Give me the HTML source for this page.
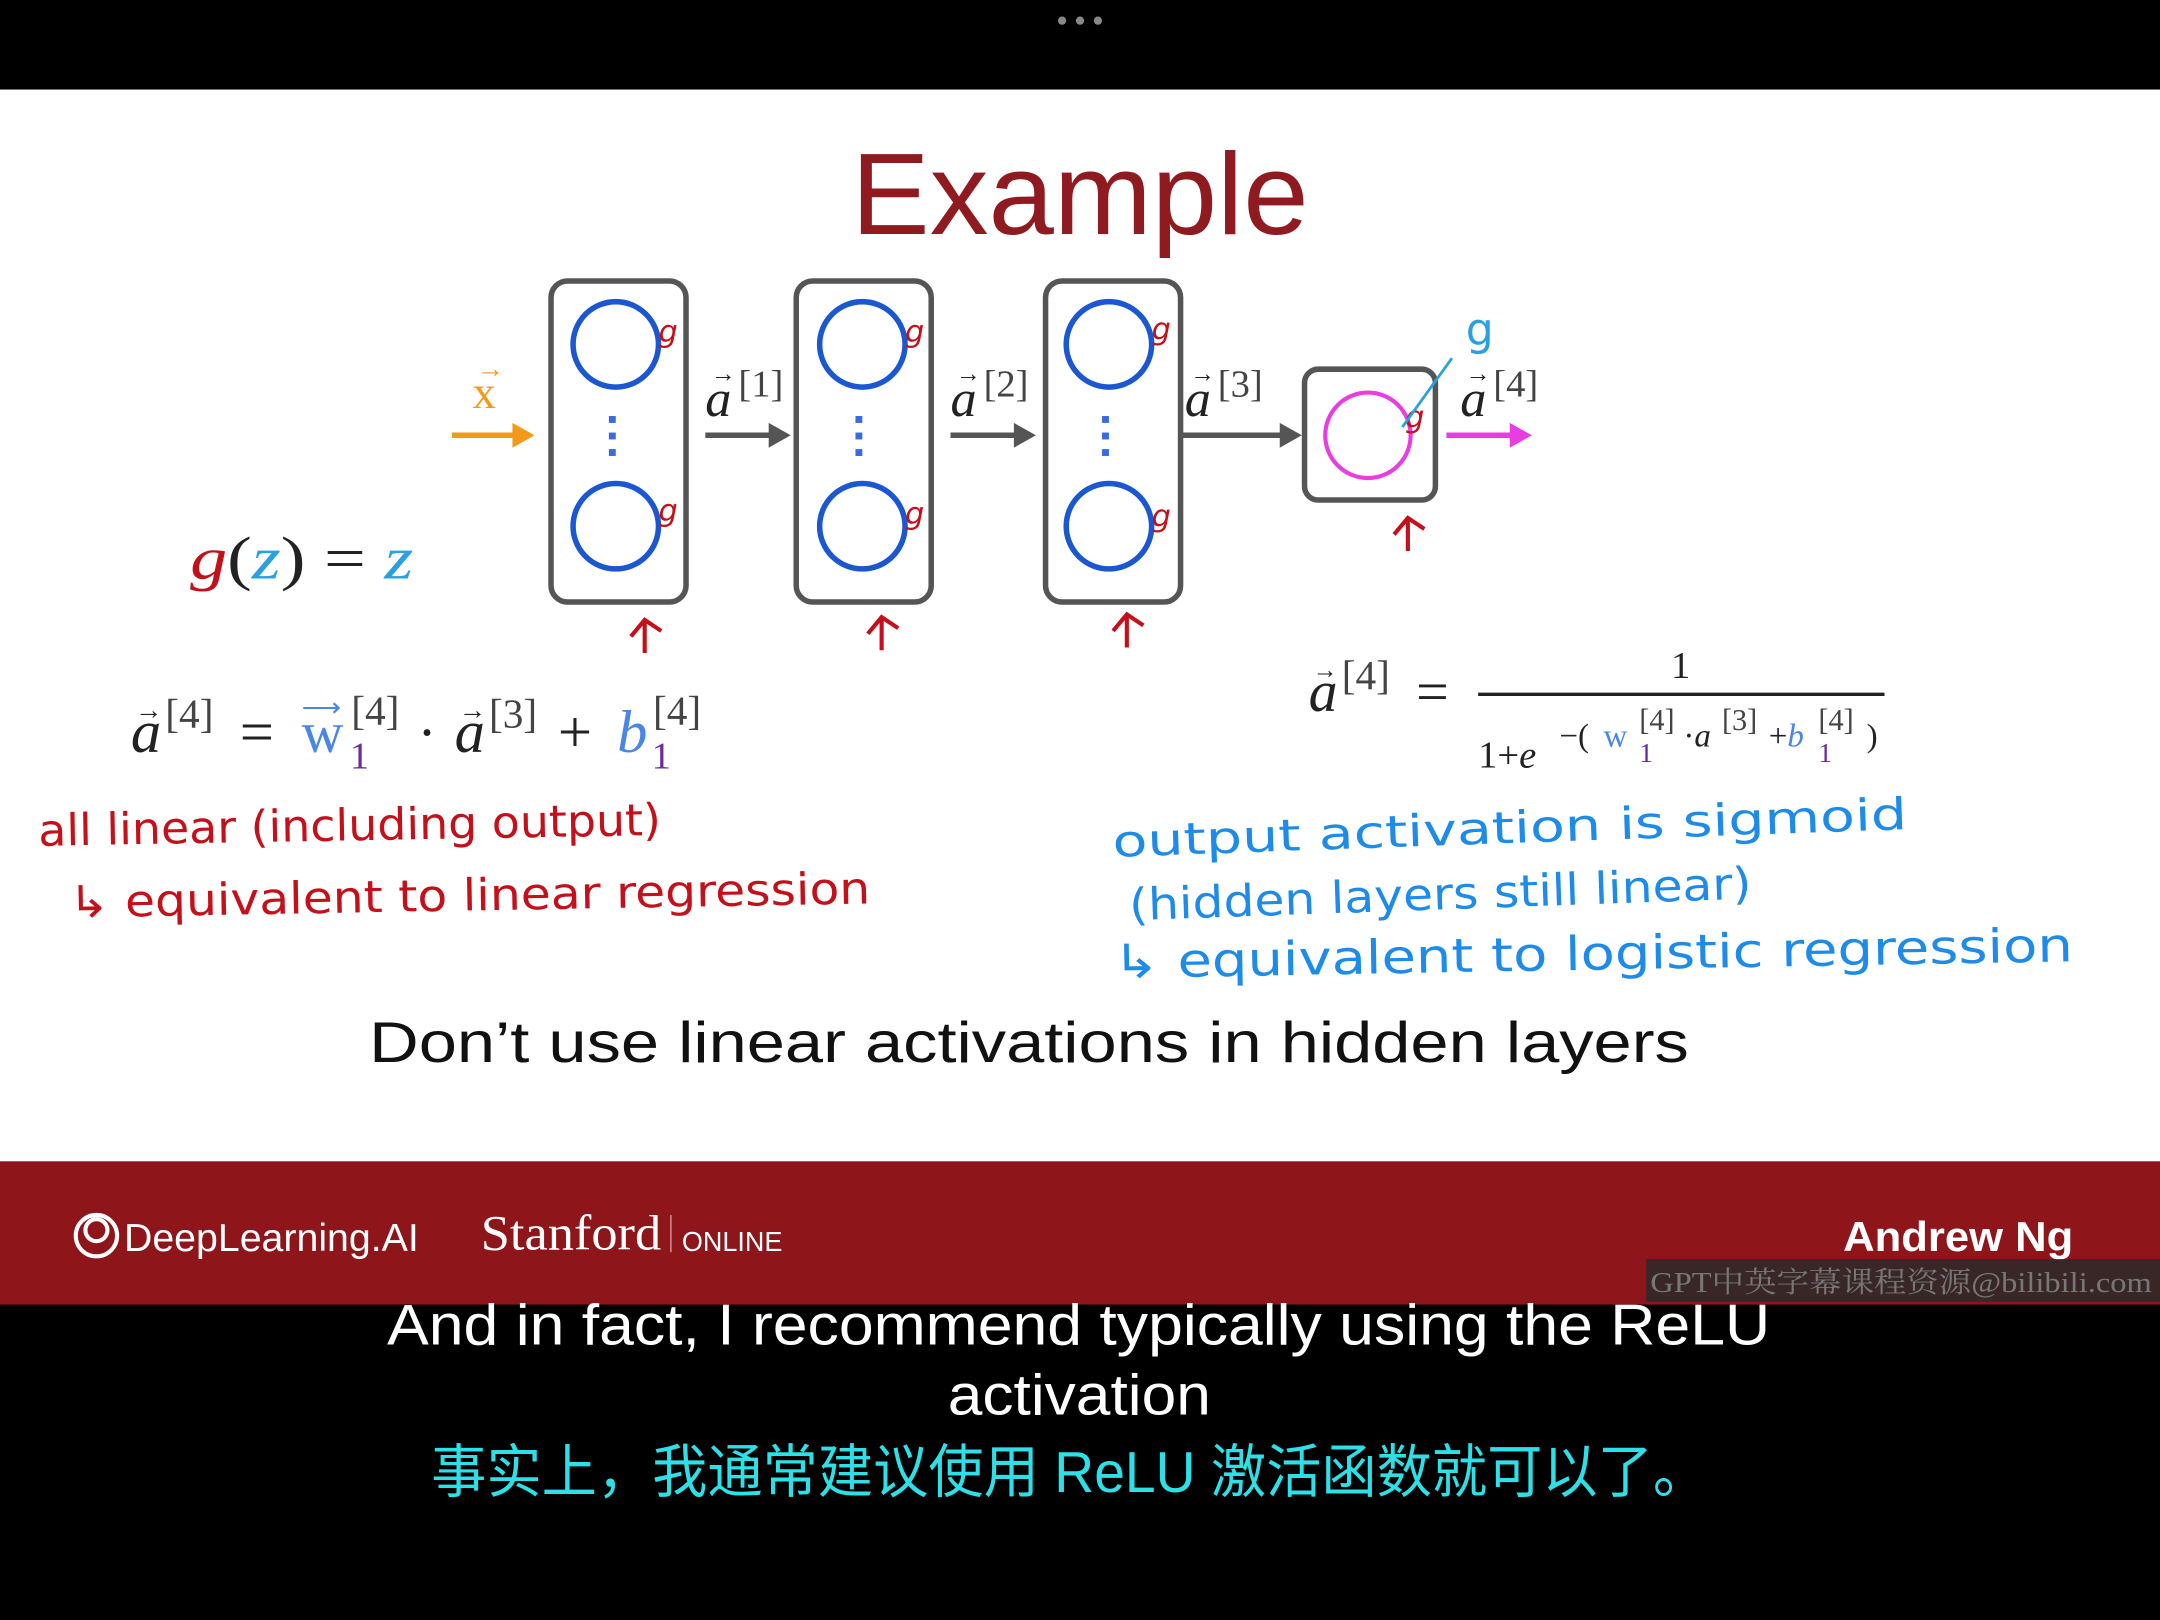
<!DOCTYPE html>
<html><head><meta charset="utf-8"><style>
html,body{margin:0;padding:0;background:#000;}
svg{display:block}
.m{font-family:"Liberation Serif",serif;}
.h{font-family:"DejaVu Sans","Liberation Sans",sans-serif;}
</style></head><body>
<svg width="2160" height="1620" viewBox="0 0 1568 1176" preserveAspectRatio="none" xmlns="http://www.w3.org/2000/svg">
<rect width="1568" height="1176" fill="#000"/>
<circle cx="771" cy="15" r="3" fill="#888"/><circle cx="784" cy="15" r="3" fill="#888"/><circle cx="797" cy="15" r="3" fill="#888"/>
<rect y="65" width="1568" height="779" fill="#fff"/>
<rect y="843" width="1568" height="104" fill="#8e161b"/>
<text x="618" y="170" textLength="332" lengthAdjust="spacingAndGlyphs" font-family="Liberation Sans,sans-serif" font-size="84" fill="#8f1a20">Example</text>

<g fill="none" stroke="#555" stroke-width="4">
<rect x="400" y="204" width="98" height="233" rx="12"/>
<rect x="578" y="204" width="98" height="233" rx="12"/>
<rect x="759" y="204" width="98" height="233" rx="12"/>
<rect x="947" y="268" width="95" height="95" rx="10"/>
</g>
<g fill="none" stroke="#1b57d0" stroke-width="4">
<circle cx="447" cy="250" r="31"/><circle cx="447" cy="382" r="31"/>
<circle cx="626" cy="250" r="31"/><circle cx="626" cy="382" r="31"/>
<circle cx="805" cy="250" r="31"/><circle cx="805" cy="382" r="31"/>
</g>
<circle cx="993" cy="316" r="31" fill="none" stroke="#e83de0" stroke-width="3"/>
<g fill="#3a6ae0">
<rect x="442" y="302" width="5" height="5"/><rect x="442" y="314" width="5" height="5"/><rect x="442" y="326" width="5" height="5"/>
<rect x="621" y="302" width="5" height="5"/><rect x="621" y="314" width="5" height="5"/><rect x="621" y="326" width="5" height="5"/>
<rect x="800" y="302" width="5" height="5"/><rect x="800" y="314" width="5" height="5"/><rect x="800" y="326" width="5" height="5"/>
</g>
<g class="h" font-size="22" fill="#c4101a" font-style="italic">
<text x="478" y="248">g</text><text x="478" y="378">g</text>
<text x="657" y="248">g</text><text x="657" y="380">g</text>
<text x="836" y="246">g</text><text x="836" y="382">g</text>
<text x="1020" y="310">g</text>
</g>
<line x1="1018" y1="310" x2="1054" y2="260" stroke="#2aa0e0" stroke-width="2"/>
<text x="1064" y="250" class="h" font-size="32" fill="#2aa0e0">g</text>

<g stroke-width="4" fill="none">
<line x1="328" y1="316" x2="378" y2="316" stroke="#f39a1a"/>
<line x1="512" y1="316" x2="562" y2="316" stroke="#555"/>
<line x1="690" y1="316" x2="740" y2="316" stroke="#555"/>
<line x1="858" y1="316" x2="933" y2="316" stroke="#555"/>
<line x1="1050" y1="316" x2="1100" y2="316" stroke="#e83de0"/>
</g>
<polygon points="388,316 372,307 372,325" fill="#f39a1a"/>
<polygon points="574,316 558,307 558,325" fill="#555"/>
<polygon points="752,316 736,307 736,325" fill="#555"/>
<polygon points="945,316 929,307 929,325" fill="#555"/>
<polygon points="1112,316 1096,307 1096,325" fill="#e83de0"/>

<g class="m" font-size="38" fill="#222">
<text x="343" y="296" fill="#f39a1a" font-size="34">x</text>
<text x="346" y="274" fill="#f39a1a" font-size="20">→</text>
<text x="512" y="302" font-style="italic">a</text><text x="536" y="288" font-size="28" fill="#444">[1]</text>
<text x="690" y="302" font-style="italic">a</text><text x="714" y="288" font-size="28" fill="#444">[2]</text>
<text x="860" y="302" font-style="italic">a</text><text x="884" y="288" font-size="28" fill="#444">[3]</text>
<text x="1060" y="302" font-style="italic">a</text><text x="1084" y="288" font-size="28" fill="#444">[4]</text>
</g>
<g class="m" font-size="18" fill="#222">
<text x="516" y="277">→</text><text x="694" y="277">→</text><text x="864" y="277">→</text><text x="1064" y="277">→</text>
</g>

<g stroke="#c4101a" stroke-width="3" fill="none">
<path d="M468 474 L468 452 M458 462 L468 450 L480 458"/>
<path d="M640 472 L640 450 M630 460 L640 448 L652 456"/>
<path d="M818 470 L818 448 M808 458 L818 446 L830 454"/>
<path d="M1022 400 L1022 378 M1012 388 L1022 376 L1034 384"/>
</g>

<text x="138" y="420" textLength="162" lengthAdjust="spacingAndGlyphs" class="m" font-size="44" font-style="italic"><tspan fill="#c4101a">g</tspan><tspan fill="#222" font-style="normal">(</tspan><tspan fill="#2aa0e0">z</tspan><tspan fill="#222" font-style="normal">) = </tspan><tspan fill="#2aa0e0">z</tspan></text>

<g class="m" fill="#222">
<text x="95" y="546" font-size="44" font-style="italic">a</text>
<text x="98" y="522" font-size="20">→</text>
<text x="120" y="528" font-size="30" fill="#444">[4]</text>
<text x="174" y="546" font-size="44">=</text>
<text x="219" y="546" font-size="42" fill="#4a86e8">w</text>
<text x="219" y="520" font-size="20" fill="#4a86e8">⟶</text>
<text x="255" y="526" font-size="30" fill="#444">[4]</text>
<text x="254" y="558" font-size="28" fill="#6a2aa0">1</text>
<text x="303" y="546" font-size="42">·</text>
<text x="330" y="546" font-size="44" font-style="italic">a</text>
<text x="333" y="522" font-size="20">→</text>
<text x="355" y="528" font-size="30" fill="#444">[3]</text>
<text x="405" y="546" font-size="44">+</text>
<text x="448" y="546" font-size="44" font-style="italic" fill="#4a86e8">b</text>
<text x="474" y="526" font-size="30" fill="#444">[4]</text>
<text x="473" y="558" font-size="28" fill="#6a2aa0">1</text>
</g>

<g class="m" fill="#222">
<text x="950" y="516" font-size="42" font-style="italic">a</text>
<text x="953" y="492" font-size="18">→</text>
<text x="974" y="500" font-size="30" fill="#444">[4]</text>
<text x="1028" y="516" font-size="42">=</text>
<line x1="1073" y1="504" x2="1368" y2="504" stroke="#222" stroke-width="2.5"/>
<text x="1220" y="492" font-size="28" text-anchor="middle">1</text>
<text x="1073" y="557" font-size="28">1+<tspan font-style="italic">e</tspan></text>
<text x="1132" y="542" font-size="24">−(</text>
<text x="1164" y="542" font-size="24" fill="#4a86e8">w</text>
<text x="1190" y="530" font-size="22" fill="#444">[4]</text>
<text x="1190" y="553" font-size="20" fill="#6a2aa0">1</text>
<text x="1222" y="542" font-size="24">·<tspan font-style="italic">a</tspan></text>
<text x="1250" y="530" font-size="22" fill="#444">[3]</text>
<text x="1284" y="542" font-size="24">+<tspan font-style="italic" fill="#4a86e8">b</tspan></text>
<text x="1320" y="530" font-size="22" fill="#444">[4]</text>
<text x="1320" y="553" font-size="20" fill="#6a2aa0">1</text>
<text x="1355" y="542" font-size="24">)</text>
</g>

<g class="h">
<text x="28" y="614" textLength="452" lengthAdjust="spacingAndGlyphs" font-size="32" fill="#c4101a" transform="rotate(-1 28 614)">all linear (including output)</text>
<text x="50" y="666" textLength="582" lengthAdjust="spacingAndGlyphs" font-size="32" fill="#c4101a" transform="rotate(-1 50 666)">↳ equivalent to linear regression</text>
<text x="808" y="622" textLength="577" lengthAdjust="spacingAndGlyphs" font-size="32" fill="#1e8be8" transform="rotate(-2 808 622)">output activation is sigmoid</text>
<text x="820" y="668" textLength="452" lengthAdjust="spacingAndGlyphs" font-size="32" fill="#1e8be8" transform="rotate(-2 820 668)">(hidden layers still linear)</text>
<text x="808" y="710" textLength="697" lengthAdjust="spacingAndGlyphs" font-size="34" fill="#1e8be8" transform="rotate(-1 808 710)">↳ equivalent to logistic regression</text>
</g>

<text x="268" y="771" textLength="958" lengthAdjust="spacingAndGlyphs" font-family="Liberation Sans,sans-serif" font-size="42" fill="#111">Don’t use linear activations in hidden layers</text>

<circle cx="70" cy="897" r="15" fill="none" stroke="#fff" stroke-width="3"/>
<circle cx="70" cy="893" r="8" fill="none" stroke="#fff" stroke-width="3"/>
<text x="90" y="908" textLength="214" lengthAdjust="spacingAndGlyphs" font-family="Liberation Sans,sans-serif" font-size="28" fill="#fff">DeepLearning.AI</text>
<text x="349" y="907" textLength="131" lengthAdjust="spacingAndGlyphs" font-family="Liberation Serif,serif" font-size="36" fill="#fff">Stanford</text>
<line x1="487" y1="882" x2="487" y2="909" stroke="#d99" stroke-width="1"/>
<text x="495" y="908" textLength="73" lengthAdjust="spacingAndGlyphs" font-family="Liberation Sans,sans-serif" font-size="20" fill="#fff">ONLINE</text>
<text x="1338" y="908" textLength="167" lengthAdjust="spacingAndGlyphs" font-family="Liberation Sans,sans-serif" font-weight="bold" font-size="30" fill="#fff">Andrew Ng</text>

<rect x="1195" y="914" width="373" height="31" fill="#2a2a2a" opacity="0.85"/>
<text x="1198" y="938" textLength="364" lengthAdjust="spacingAndGlyphs" font-family="Liberation Serif,Noto Serif CJK SC,serif" font-size="21" fill="#777">GPT中英字幕课程资源@bilibili.com</text>

<g font-family="Liberation Sans,Noto Sans CJK SC,sans-serif" font-size="42">
<text x="281" y="976" textLength="1004" lengthAdjust="spacingAndGlyphs" fill="#fff">And in fact, I recommend typically using the ReLU</text>
<text x="688" y="1027" textLength="191" lengthAdjust="spacingAndGlyphs" fill="#fff">activation</text>
<text x="313" y="1083" textLength="927" lengthAdjust="spacingAndGlyphs" fill="#2de0e8">事实上，我通常建议使用 ReLU 激活函数就可以了。</text>
</g>
</svg>
</body></html>
